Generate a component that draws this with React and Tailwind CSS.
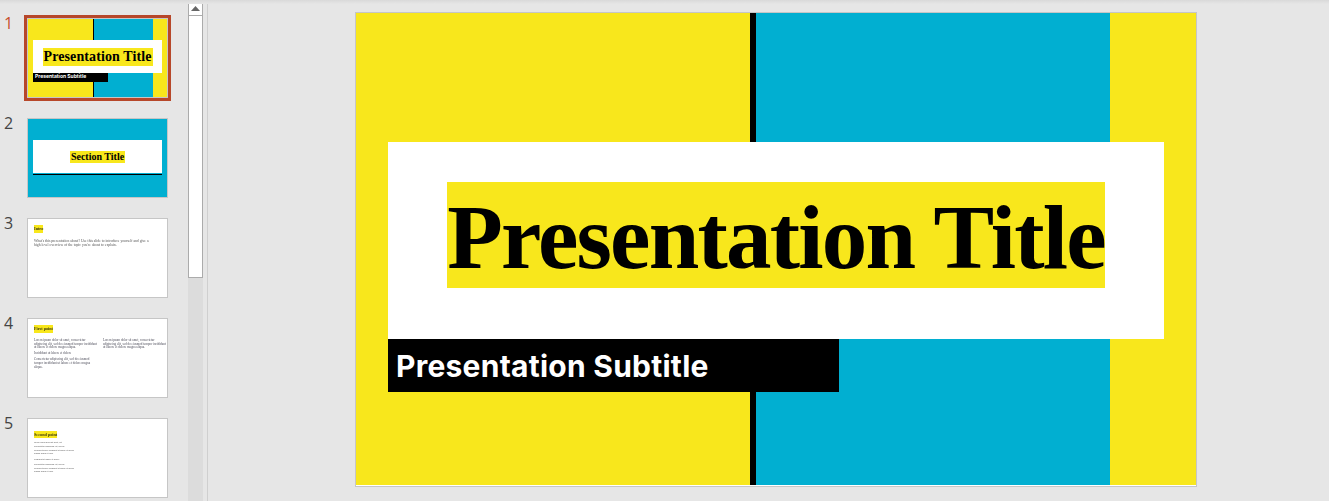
const serif = "font-['Liberation_Serif',serif]";

function Num({ n, active }) {
  return (
    <div className={`w-[27px] -mt-[5px] pl-[4px] text-[16px] leading-[20px] font-['Open_Sans',sans-serif] ${active ? "text-[#c8502f]" : "text-[#444444]"}`}>
      {n}
    </div>
  );
}

function Thumb({ n, active, children }) {
  return (
    <div className="flex h-[100px] items-start">
      <Num n={n} active={active} />
      <div className={`h-[80px] w-[141px] overflow-hidden border border-[#c6c6c6] bg-white ${active ? "outline-3 outline-[#b7472a]" : ""}`}>
        {children}
      </div>
    </div>
  );
}

function TitleThumb() {
  return (
    <div className="relative h-full">
      <div className="flex h-full">
        <div className="w-[65px] bg-[#f8e71c]" />
        <div className="w-[1px] bg-black" />
        <div className="w-[59px] bg-[#01afd1]" />
        <div className="flex-1 bg-[#f8e71c]" />
      </div>
      <div className="absolute inset-0 flex flex-col pl-[5px] pt-[21px]">
        <div className="flex h-[33px] w-[129px] items-center justify-center bg-white">
          <span className={`h-[18px] w-[110px] whitespace-nowrap bg-[#f8e71c] text-center text-[14px] leading-[18px] font-bold tracking-[0.1px] text-black ${serif}`}>
            Presentation Title
          </span>
        </div>
        <div className="h-[9px] w-[75px] bg-black pl-[2px] text-[5px] leading-[7px] font-bold whitespace-nowrap text-white font-['Inter',sans-serif]">
          Presentation Subtitle
        </div>
      </div>
    </div>
  );
}

function SectionThumb() {
  return (
    <div className="flex h-full flex-col bg-[#01afd1] pl-[5px] pr-[5px] pt-[21px]">
      <div className="flex h-[33px] items-center justify-center bg-white">
        <span className={`h-[12px] bg-[#f8e71c] px-px text-[10px] leading-[12px] font-bold text-black ${serif}`}>Section Title</span>
      </div>
      <div className="mt-[1px] h-[1px] bg-black" />
    </div>
  );
}

function ThumbHeading({ children }) {
  return (
    <div className="h-[8px] w-fit bg-[#f8e71c]">
      <span className={`block text-[4.2px] leading-[8px] font-bold whitespace-nowrap text-[#3c3a0c] blur-[0.3px] ${serif}`}>{children}</span>
    </div>
  );
}

function IntroThumb() {
  return (
    <div className="px-[6px] pt-[6px]">
      <ThumbHeading>Intro</ThumbHeading>
      <p className={`mt-[6px] text-[3.7px] leading-[4px] whitespace-nowrap text-[#555555] blur-[0.3px] ${serif}`}>
        What's this presentation about? Use this slide to introduce yourself and give a
        <br />
        high level overview of the topic you're about to explain.
      </p>
    </div>
  );
}

function PointThumb() {
  return (
    <div className="px-[6px] pt-[6px]">
      <ThumbHeading>First point</ThumbHeading>
      <div className={`mt-[6px] flex gap-[9px] text-[3.2px] leading-[3.6px] whitespace-nowrap text-[#4f4f5c] blur-[0.3px] ${serif}`}>
        <div className="w-[60px]">
          <p>
            Lorem ipsum dolor sit amet, consectetur
            <br />
            adipiscing elit, sed do eiusmod tempor incididunt
            <br />
            ut labore et dolore magna aliqua.
          </p>
          <p className="mt-[2px]">Incididunt ut labore et dolore</p>
          <p className="mt-[3px]">
            Consectetur adipiscing elit, sed do eiusmod
            <br />
            tempor incididunt ut labore et dolore magna
            <br />
            aliqua.
          </p>
        </div>
        <div className="w-[60px]">
          <p>
            Lorem ipsum dolor sit amet, consectetur
            <br />
            adipiscing elit, sed do eiusmod tempor incididunt
            <br />
            ut labore et dolore magna aliqua.
          </p>
        </div>
      </div>
    </div>
  );
}

function SecondThumb() {
  return (
    <div className="px-[6px] pt-[12px]">
      <div className="h-[7px] w-fit bg-[#f8e71c]">
        <span className={`block text-[4.2px] leading-[7px] font-bold whitespace-nowrap text-[#3c3a0c] blur-[0.3px] ${serif}`}>Second point</span>
      </div>
      <div className="mt-[3px] text-[2px] leading-[3.3px] whitespace-nowrap text-[#555555] blur-[0.2px] font-['Liberation_Sans',sans-serif]">
        <p>Lorem ipsum dolor sit amet, elit</p>
        <p className="mt-[1px]">
          Consectetur adipiscing elit, sed do
          <br />
          eiusmod tempor incididunt ut labore et dolore
          <br />
          magna aliqua ut enim
        </p>
        <p className="mt-[3px]">Incididunt ut labore et dolore</p>
        <p className="mt-[2px]">
          Consectetur adipiscing elit, sed do
          <br />
          eiusmod tempor incididunt ut labore et dolore
          <br />
          magna aliqua ut enim
        </p>
      </div>
    </div>
  );
}

function Scrollbar() {
  return (
    <div className="flex h-full w-[15px] flex-col bg-[#dcdcdc] pt-px">
      <div className="flex h-[15px] items-center justify-center border border-[#ababab] bg-white">
        <svg width="9" height="5" viewBox="0 0 9 5"><polygon points="4.5,0 9,5 0,5" fill="#666666" /></svg>
      </div>
      <div className="h-[262px] border border-t-0 border-[#ababab] bg-white" />
    </div>
  );
}

function MainSlide() {
  return (
    <div className="relative h-[475px] w-[842px] border border-[#c6c6c6] bg-white">
      <div className="flex h-[472px]">
        <div className="w-[394px] bg-[#f8e71c]" />
        <div className="w-[6px] bg-black" />
        <div className="w-[354px] bg-[#01afd1]" />
        <div className="flex-1 bg-[#f8e71c]" />
      </div>
      <div className="absolute inset-0 flex flex-col pl-[32px] pt-[129px]">
        <div className="flex h-[197px] w-[776px] justify-center bg-white pt-[40px]">
          <span className={`h-[106px] w-[658px] whitespace-nowrap bg-[#f8e71c] text-center text-[91px] leading-[112px] font-bold tracking-[-1.8px] text-black ${serif}`}>
            Presentation Title
          </span>
        </div>
        <div className="h-[53px] w-[451px] bg-black pl-[8px] text-[30px] leading-[55px] font-bold tracking-[0.25px] text-white font-['Inter',sans-serif]">
          Presentation Subtitle
        </div>
      </div>
    </div>
  );
}

export default function App() {
  return (
    <div className="relative flex h-[501px] w-[1329px] overflow-hidden bg-[#e6e6e6]">
      <div className="absolute inset-x-0 top-0 h-[4px] bg-gradient-to-b from-[#d9d9d9] to-[#e6e6e6]" />
      <div className="w-[188px] shrink-0 pt-[18px]">
        <Thumb n="1" active><TitleThumb /></Thumb>
        <Thumb n="2"><SectionThumb /></Thumb>
        <Thumb n="3"><IntroThumb /></Thumb>
        <Thumb n="4"><PointThumb /></Thumb>
        <Thumb n="5"><SecondThumb /></Thumb>
      </div>
      <Scrollbar />
      <div className="ml-[4px] flex-1 border-l border-[#cfcfcf] pl-[147px] pt-[12px]">
        <MainSlide />
      </div>
    </div>
  );
}
